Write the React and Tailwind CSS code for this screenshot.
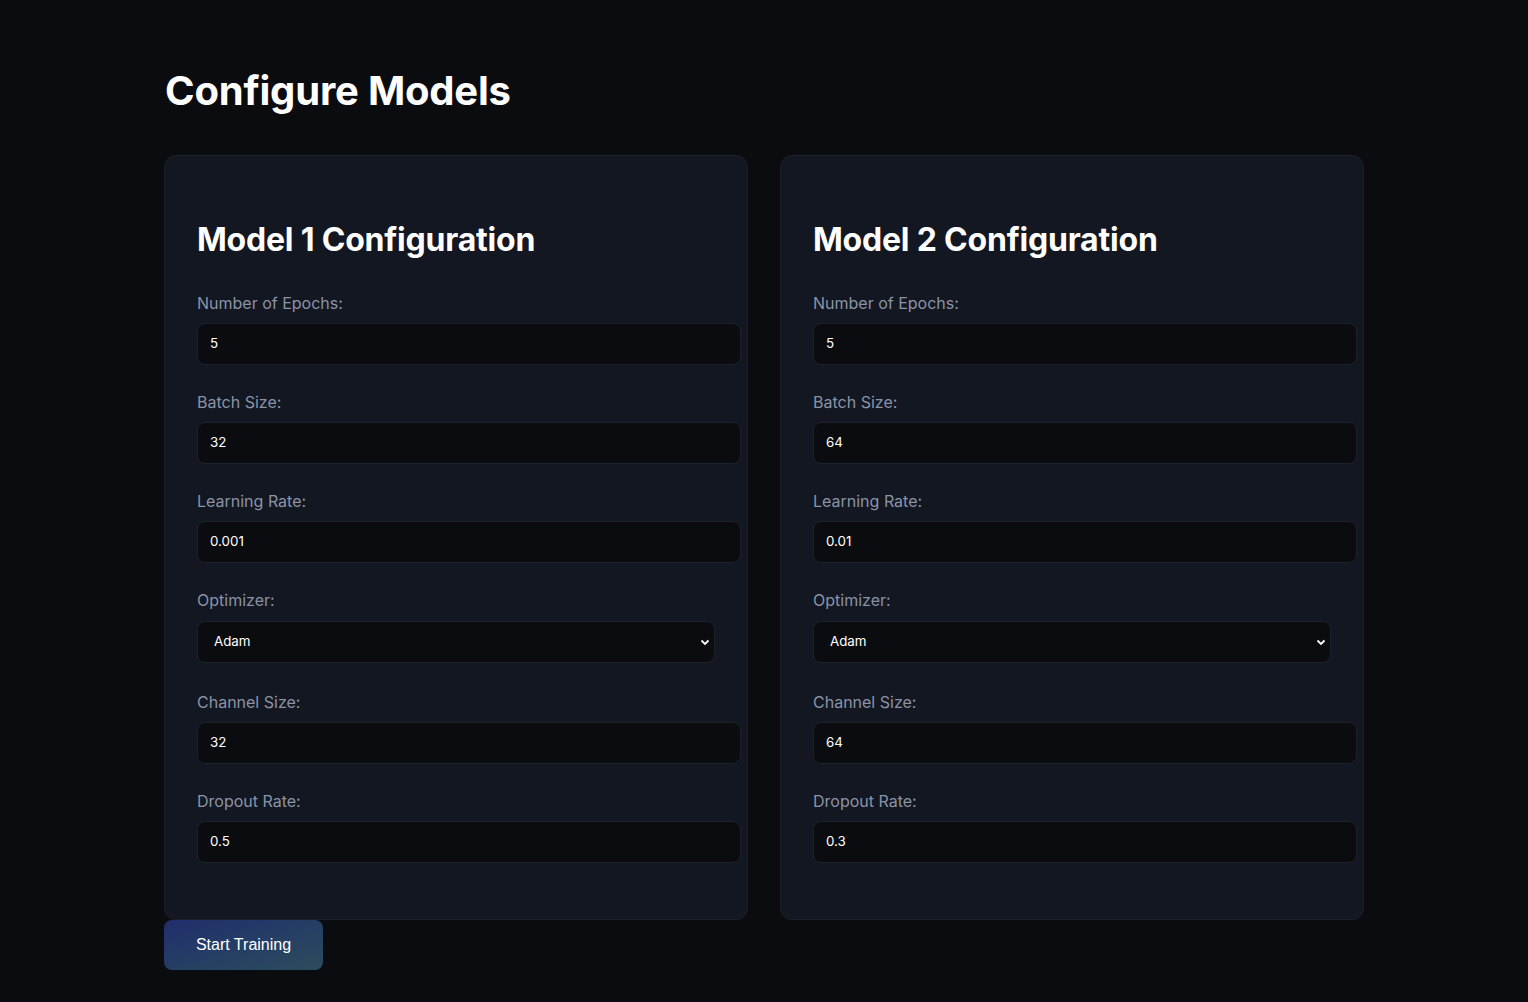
import React from "react";

const models = [
  { title: "Model 1 Configuration", epochs: "5", batch: "32", lr: "0.001", opt: "Adam", channel: "32", dropout: "0.5" },
  { title: "Model 2 Configuration", epochs: "5", batch: "64", lr: "0.01", opt: "Adam", channel: "64", dropout: "0.3" },
];

function Field({ label, value }) {
  return (
    <div className="mb-[25px]">
      <label className="block text-[16px] leading-[24px] text-[#8a93a6] mb-2">{label}</label>
      <div className="mr-[-26px] h-[42px] rounded-[8px] border border-[#1d212a] bg-[#0b0c0f] px-3 flex items-center text-[13.33px] text-white">
        {value}
      </div>
    </div>
  );
}

function SelectField({ label, value }) {
  return (
    <div className="mb-[27px]">
      <label className="block text-[16px] leading-[24px] text-[#8a93a6] mb-[9px]">{label}</label>
      <div className="relative h-[42px] rounded-[8px] border border-[#1d212a] bg-[#0b0c0f] pl-4 flex items-center text-[13.33px] text-white">
        {value}
        <svg className="absolute right-[4px] top-1/2 -translate-y-1/2" width="10" height="8" viewBox="0 0 10 8">
          <path d="M1.5 2.5 L5 6 L8.5 2.5" stroke="white" strokeWidth="1.8" fill="none" />
        </svg>
      </div>
    </div>
  );
}

function Card({ m }) {
  return (
    <div className="flex-1 rounded-[12px] border border-[#1d212a] bg-[#131722] px-8 pt-8 pb-[31px]">
      <h2 className="mt-[33px] mb-[32px] text-[32px] leading-[38px] font-bold text-white tracking-[-0.2px]">{m.title}</h2>
      <Field label="Number of Epochs:" value={m.epochs} />
      <Field label="Batch Size:" value={m.batch} />
      <Field label="Learning Rate:" value={m.lr} />
      <SelectField label="Optimizer:" value={m.opt} />
      <Field label="Channel Size:" value={m.channel} />
      <Field label="Dropout Rate:" value={m.dropout} />
    </div>
  );
}

export default function App() {
  return (
    <div className="min-h-[1002px] bg-[#0b0c10] font-['Inter',sans-serif]">
      <div className="mx-auto w-[1200px] pt-[67px]">
        <h1 className="text-[40px] leading-[48px] font-bold text-white tracking-[-0.2px] pl-px">Configure Models</h1>
        <div className="mt-[40px] flex gap-8">
          {models.map((m) => (
            <Card key={m.title} m={m} />
          ))}
        </div>
        <button className="h-[50px] w-[159px] rounded-[8px] bg-gradient-to-br from-[#212d6c] to-[#2c4c5c] text-white text-[16px] font-['Liberation_Sans',Arial,sans-serif]">
          Start Training
        </button>
      </div>
    </div>
  );
}
